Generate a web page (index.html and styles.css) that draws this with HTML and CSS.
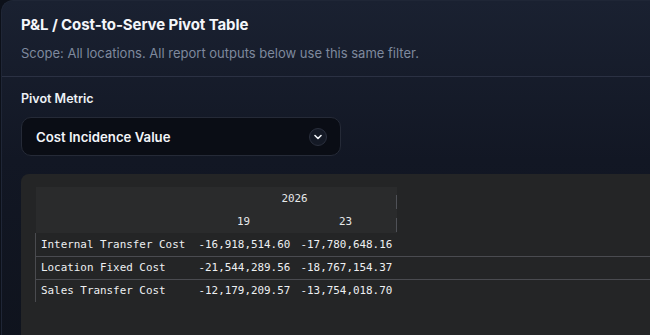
FILE: index.html
```html
<!DOCTYPE html>
<html>
<head>
<meta charset="utf-8">
<link rel="stylesheet" href="styles.css">
</head>
<body>
<div class="card">
  <div class="card-header">
    <h1 class="title">P&amp;L / Cost-to-Serve Pivot Table</h1>
    <p class="subtitle">Scope: All locations. All report outputs below use this same filter.</p>
  </div>
  <div class="card-body">
    <div class="field-label">Pivot Metric</div>
    <div class="select">
      <span class="select-value">Cost Incidence Value</span>
      <span class="chevron">
        <svg width="8" height="6" viewBox="0 0 8 6"><path d="M1 1.5 L4 4.5 L7 1.5" fill="none" stroke="#f1f3f7" stroke-width="1.6" stroke-linecap="round" stroke-linejoin="round"/></svg>
      </span>
    </div>
    <div class="pivot">
      <table class="grid">
        <colgroup>
          <col class="c-label">
          <col class="c-num">
          <col class="c-num">
          <col>
        </colgroup>
        <thead>
          <tr>
            <th class="corner"></th>
            <th class="hcell group" colspan="2"><span>2026</span></th>
            <th class="filler"></th>
          </tr>
          <tr>
            <th class="corner"></th>
            <th class="hcell"><span>19</span></th>
            <th class="hcell last"><span>23</span></th>
            <th class="filler"></th>
          </tr>
        </thead>
        <tbody>
          <tr>
            <td class="rowhead">Internal Transfer Cost</td>
            <td class="num">-16,918,514.60</td>
            <td class="num">-17,780,648.16</td>
            <td class="filler"></td>
          </tr>
          <tr>
            <td class="rowhead">Location Fixed Cost</td>
            <td class="num">-21,544,289.56</td>
            <td class="num">-18,767,154.37</td>
            <td class="filler"></td>
          </tr>
          <tr>
            <td class="rowhead">Sales Transfer Cost</td>
            <td class="num">-12,179,209.57</td>
            <td class="num">-13,754,018.70</td>
            <td class="filler"></td>
          </tr>
        </tbody>
      </table>
    </div>
  </div>
</div>
</body>
</html>
```
FILE: styles.css
```css
html, body {
  margin: 0;
  padding: 0;
  height: 100%;
  overflow: hidden;
  background: #0c1019;
}
body {
  font-family: "Inter", "Open Sans", sans-serif;
}
.card {
  margin-left: 1px;
  width: 700px;
  height: 400px;
  border: 1px solid #1f2636;
  border-right: none;
  border-radius: 12px 0 0 0;
  background: linear-gradient(180deg, #1a2131 0%, #121724 40%, #0e121b 100%);
  box-sizing: border-box;
}
.card-header {
  padding: 14px 20px 0 19px;
  height: 76px;
  box-sizing: border-box;
  border-bottom: 1px solid #2b3143;
}
.title {
  margin: 0;
  font-size: 15px;
  font-weight: 700;
  color: #f4f6fa;
  line-height: 20px;
  letter-spacing: -0.1px;
}
.subtitle {
  margin: 9px 0 0;
  font-size: 13px;
  color: #7e899d;
  line-height: 18px;
}
.card-body {
  padding: 14px 0 0 19px;
}
.field-label {
  font-size: 12.5px;
  font-weight: 600;
  color: #eef1f6;
  line-height: 16px;
}
.select {
  margin-top: 10px;
  width: 320px;
  height: 39px;
  box-sizing: border-box;
  border: 1px solid #252a37;
  border-radius: 10px;
  background: #0a0d15;
  display: flex;
  align-items: center;
  justify-content: space-between;
  padding: 0 13px 0 14px;
}
.select-value {
  font-size: 13.2px;
  font-weight: 600;
  color: #f3f5f9;
}
.chevron {
  width: 16px;
  height: 16px;
  border-radius: 50%;
  border: 1px solid #2a2f3d;
  background: #141925;
  display: flex;
  align-items: center;
  justify-content: center;
}
.pivot {
  margin-top: 18px;
  width: 700px;
  height: 200px;
  background: #242526;
  border-radius: 8px 0 0 0;
  padding: 13px 0 0 14px;
  box-sizing: border-box;
}
.grid {
  border-collapse: collapse;
  width: 100%;
  font-family: "DejaVu Sans Mono", "Liberation Mono", monospace;
  font-size: 10.9px;
  color: #eef0f2;
  table-layout: fixed;
}
.c-label {
  width: 157px;
}
.c-num {
  width: 102px;
}
.grid th, .grid td {
  height: 23px;
  padding: 0 6px;
  box-sizing: border-box;
  white-space: nowrap;
  font-weight: 400;
}
.corner {
  background: #2a2b2c;
}
.hcell {
  background: #2a2b2c;
  text-align: center;
  position: relative;
  color: #e6e8ea;
}
.group::after, .last::after {
  content: "";
  position: absolute;
  right: 0;
  top: 8px;
  bottom: 1px;
  width: 1px;
  background: #4f5157;
}
.filler {
  background: transparent;
}
.grid .rowhead {
  border-left: 1px solid #4a4b4f;
  text-align: left;
  padding-left: 5px;
}
.grid .num {
  text-align: right;
  padding-right: 7px;
}
tbody tr + tr td {
  border-top: 1px solid #4a4b50;
}
```
